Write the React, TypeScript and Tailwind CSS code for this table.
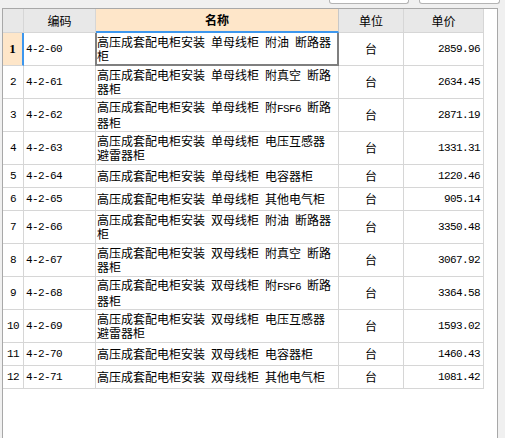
import React from "react";

type Row = { n: number; code: string; lines: string[]; price: string };

const rows: Row[] = [
  { n: 1, code: "4-2-60", lines: ["高压成套配电柜安装 单母线柜 附油 断路器", "柜"], price: "2859.96" },
  { n: 2, code: "4-2-61", lines: ["高压成套配电柜安装 单母线柜 附真空 断路", "器柜"], price: "2634.45" },
  { n: 3, code: "4-2-62", lines: ["高压成套配电柜安装 单母线柜 附FSF6 断路", "器柜"], price: "2871.19" },
  { n: 4, code: "4-2-63", lines: ["高压成套配电柜安装 单母线柜 电压互感器", "避雷器柜"], price: "1331.31" },
  { n: 5, code: "4-2-64", lines: ["高压成套配电柜安装 单母线柜 电容器柜"], price: "1220.46" },
  { n: 6, code: "4-2-65", lines: ["高压成套配电柜安装 单母线柜 其他电气柜"], price: "905.14" },
  { n: 7, code: "4-2-66", lines: ["高压成套配电柜安装 双母线柜 附油 断路器", "柜"], price: "3350.48" },
  { n: 8, code: "4-2-67", lines: ["高压成套配电柜安装 双母线柜 附真空 断路", "器柜"], price: "3067.92" },
  { n: 9, code: "4-2-68", lines: ["高压成套配电柜安装 双母线柜 附FSF6 断路", "器柜"], price: "3364.58" },
  { n: 10, code: "4-2-69", lines: ["高压成套配电柜安装 双母线柜 电压互感器", "避雷器柜"], price: "1593.02" },
  { n: 11, code: "4-2-70", lines: ["高压成套配电柜安装 双母线柜 电容器柜"], price: "1460.43" },
  { n: 12, code: "4-2-71", lines: ["高压成套配电柜安装 双母线柜 其他电气柜"], price: "1081.42" },
];

const CJK = "font-['Noto_Sans_CJK_SC',sans-serif]";
const MONO = "font-['Liberation_Mono',monospace] text-[11px] tracking-[-0.6px]";

function Mixed({ text }: { text: string }) {
  const parts = text.split(/( |[A-Za-z0-9.\-]+)/).filter((p) => p.length > 0);
  return (
    <>
      {parts.map((p, i) => {
        if (p === " ") return <span key={i} className="inline-block w-[6px]" />;
        if (/^[A-Za-z0-9.\-]+$/.test(p))
          return (
            <span key={i} className={MONO}>
              {p}
            </span>
          );
        return <span key={i}>{p}</span>;
      })}
    </>
  );
}

const cellBase = "border-r border-b border-[#d6d6d6] flex items-center";

export default function App() {
  return (
    <div className={`w-[505px] h-[438px] bg-[#f0f0f0] overflow-hidden text-black ${CJK}`}>
      <div className="h-[8px] flex pl-[329px] gap-[10px]">
        <div className="w-[80px] h-[4px] bg-white border-x border-b border-[#b4b4b4] rounded-b-[3px]" />
        <div className="w-[81px] h-[4px] bg-white border-x border-b border-[#b4b4b4] rounded-b-[3px]" />
      </div>
      <div className="ml-[2px] w-[496px] h-[440px] bg-white border border-[#a8a8a8]">
        <div className="grid grid-cols-[21px_72px_243px_65px_80px] text-[12px]">
          {/* header */}
          <div className={`${cellBase} h-[24px] bg-[#e8e8e8] border-[#c8c8c8]`} />
          <div className={`${cellBase} h-[24px] bg-[#e8e8e8] border-[#c8c8c8] justify-center`}>编码</div>
          <div className={`${cellBase} h-[24px] bg-[#fee6c9] border-r-[#c8c8c8] border-b-2 border-b-[#3d97ee] justify-center font-bold`}>
            名称
          </div>
          <div className={`${cellBase} h-[24px] bg-[#e8e8e8] border-[#c8c8c8] justify-center`}>单位</div>
          <div className={`${cellBase} h-[24px] bg-[#e8e8e8] border-[#c8c8c8] justify-center`}>单价</div>

          {rows.map((r) => {
            const h = r.lines.length > 1 ? "h-[33px]" : "h-[23px]";
            const sel = r.n === 1;
            return (
              <React.Fragment key={r.n}>
                <div
                  className={`${cellBase} ${h} justify-center ${
                    sel
                      ? "bg-[#fee6c9] border-r-2 border-r-[#3d97ee] font-['Liberation_Serif',serif] font-bold text-[13px]"
                      : "font-['Liberation_Mono',monospace] text-[11px] tracking-[-0.6px]"
                  }`}
                >
                  {r.n}
                </div>
                <div className={`${cellBase} ${h} pl-[2px] ${MONO}`}>{r.code}</div>
                <div className={`${cellBase} ${h} pl-[1px] relative`}>
                  <div className="flex flex-col leading-[14px] whitespace-nowrap">
                    {r.lines.map((l, i) => (
                      <div key={i}>
                        <Mixed text={l} />
                      </div>
                    ))}
                  </div>
                  {sel && (
                    <div className="absolute left-[-1px] top-0 right-[-1px] bottom-[-1px] border-2 border-t-0 border-[#7f7f7f]" />
                  )}
                </div>
                <div className={`${cellBase} ${h} justify-center`}>台</div>
                <div className={`${cellBase} ${h} justify-end pr-[3px] ${MONO}`}>{r.price}</div>
              </React.Fragment>
            );
          })}
        </div>
      </div>
    </div>
  );
}
